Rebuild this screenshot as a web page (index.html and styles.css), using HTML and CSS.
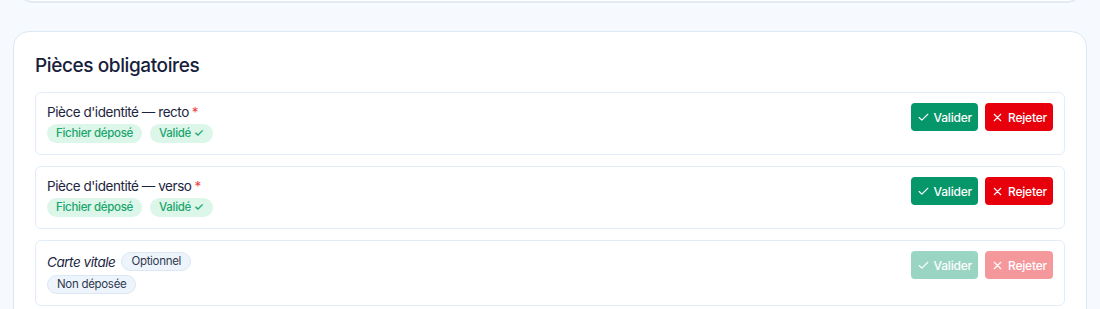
FILE: index.html
```html
<!DOCTYPE html>
<html lang="fr">
<head>
<meta charset="utf-8">
<title>Pièces obligatoires</title>
<link rel="stylesheet" href="styles.css">
</head>
<body>
<div class="page">
  <div class="prev-card"></div>
  <section class="card">
    <h2 class="card-title">Pièces obligatoires</h2>
    <div class="doc-list">
      <div class="doc">
        <div class="doc-info">
          <div class="doc-name">Pièce d'identité — recto <span class="req">*</span></div>
          <div class="doc-badges">
            <span class="badge badge-green">Fichier déposé</span>
            <span class="badge badge-green">Validé ✓</span>
          </div>
        </div>
        <div class="doc-actions">
          <button class="btn btn-ok"><svg viewBox="0 0 24 24" class="ico"><path d="M20 6 9 17l-5-5"/></svg>Valider</button>
          <button class="btn btn-ko"><svg viewBox="0 0 24 24" class="ico"><path d="M18 6 6 18M6 6l12 12"/></svg>Rejeter</button>
        </div>
      </div>
      <div class="doc">
        <div class="doc-info">
          <div class="doc-name">Pièce d'identité — verso <span class="req">*</span></div>
          <div class="doc-badges">
            <span class="badge badge-green">Fichier déposé</span>
            <span class="badge badge-green">Validé ✓</span>
          </div>
        </div>
        <div class="doc-actions">
          <button class="btn btn-ok"><svg viewBox="0 0 24 24" class="ico"><path d="M20 6 9 17l-5-5"/></svg>Valider</button>
          <button class="btn btn-ko"><svg viewBox="0 0 24 24" class="ico"><path d="M18 6 6 18M6 6l12 12"/></svg>Rejeter</button>
        </div>
      </div>
      <div class="doc">
        <div class="doc-info">
          <div class="doc-name"><em class="opt-name">Carte vitale</em><span class="badge badge-grey">Optionnel</span></div>
          <div class="doc-badges">
            <span class="badge badge-grey">Non déposée</span>
          </div>
        </div>
        <div class="doc-actions">
          <button class="btn btn-ok" disabled><svg viewBox="0 0 24 24" class="ico"><path d="M20 6 9 17l-5-5"/></svg>Valider</button>
          <button class="btn btn-ko" disabled><svg viewBox="0 0 24 24" class="ico"><path d="M18 6 6 18M6 6l12 12"/></svg>Rejeter</button>
        </div>
      </div>
    </div>
  </section>
</div>
</body>
</html>
```

FILE: styles.css
```css
* { box-sizing: border-box; }
html, body { margin: 0; padding: 0; }
body {
  background: #f6f9fd;
  font-family: Inter, "Noto Sans", sans-serif;
  color: #1c2540;
  overflow: hidden;
}
.page {
  padding: 0 13px;
}
.prev-card {
  height: 40px;
  margin: -37px 4px 0;
  background: #fff;
  border: 2px solid #e2eaf4;
  border-radius: 16px;
}
.card {
  margin-top: 28px;
  background: #fff;
  border: 1px solid #dce8f5;
  border-radius: 16px;
  padding: 20px 21px 40px;
}
.card-title {
  margin: 0 0 12px;
  font-size: 19px;
  line-height: 28px;
  font-weight: 500;
  color: #17203a;
  letter-spacing: -0.4px;
}
.doc-list {
  display: flex;
  flex-direction: column;
  gap: 11px;
}
.doc {
  display: flex;
  justify-content: space-between;
  align-items: flex-start;
  border: 1px solid #e1edf9;
  border-radius: 6px;
  padding: 11px;
}
.doc-info {
  display: flex;
  flex-direction: column;
  gap: 4px;
}
.doc-name {
  display: flex;
  align-items: center;
  gap: 6px;
  font-size: 13.5px;
  line-height: 16px;
  letter-spacing: -0.45px;
  color: #1c2540;
}
.req { color: #ef4444; margin-left: -3px; }
.opt-name { font-style: italic; }
.doc-badges {
  display: flex;
  gap: 8px;
}
.badge {
  display: inline-block;
  font-size: 11.5px;
  line-height: 15px;
  letter-spacing: -0.3px;
  padding: 2px 9px;
  border-radius: 999px;
  font-weight: 500;
  white-space: nowrap;
}
.badge-green {
  background: #dcf6ea;
  color: #1aa56c;
}
.badge-grey {
  background: #eef4fb;
  color: #2e3a50;
  border: 1px solid #dbe7f5;
  padding: 1px 9px;
  font-weight: 400;
}
.doc-actions {
  display: flex;
  gap: 7px;
  margin-top: -1px;
}
.btn {
  display: inline-flex;
  align-items: center;
  gap: 4px;
  height: 28px;
  padding: 0 6px;
  border: 0;
  border-radius: 4px;
  color: #fff;
  font-family: Inter, sans-serif;
  font-size: 12px;
  font-weight: 500;
  letter-spacing: -0.2px;
}
.btn-ok { background: #059669; }
.btn-ko { background: #e7000b; }
.btn:disabled { opacity: 0.4; }
.ico {
  width: 13px;
  height: 13px;
  fill: none;
  stroke: #fff;
  stroke-width: 2;
  stroke-linecap: round;
  stroke-linejoin: round;
}
```
